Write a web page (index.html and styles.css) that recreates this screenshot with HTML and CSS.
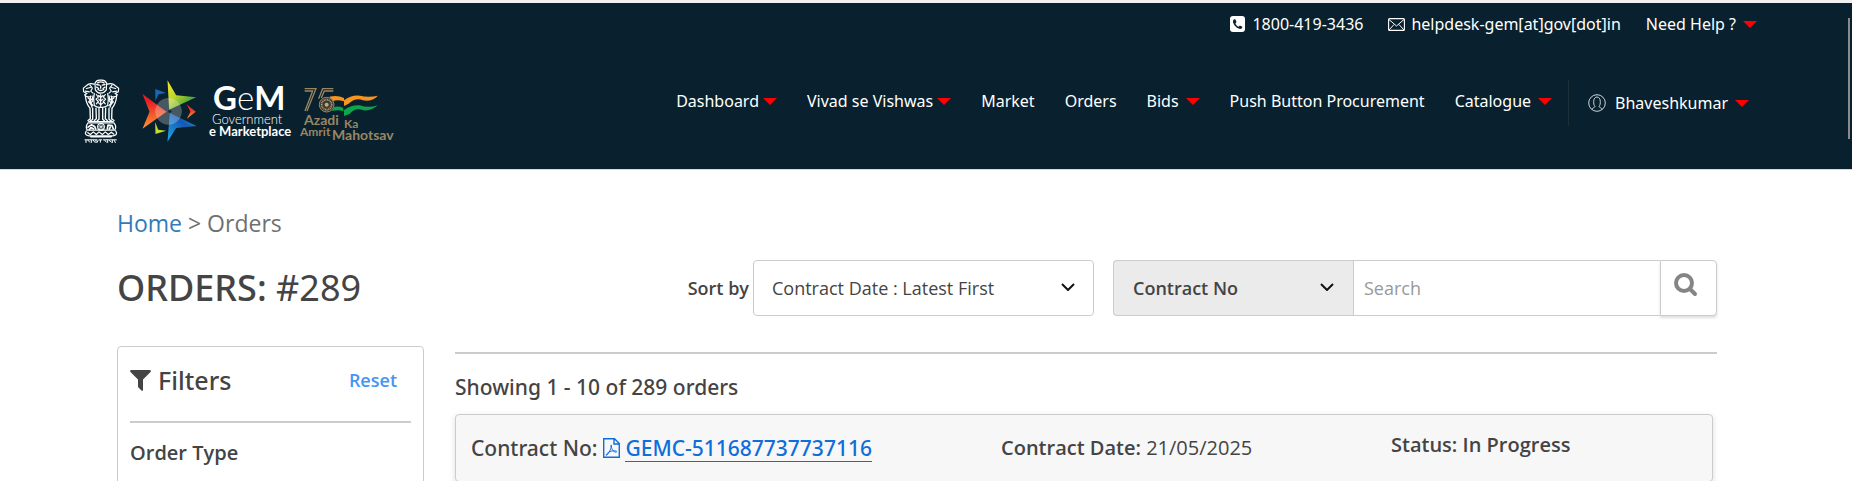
FILE: index.html
```html
<!DOCTYPE html>
<html lang="en">
<head>
<meta charset="utf-8">
<title>Orders</title>
<link rel="stylesheet" href="styles.css">
</head>
<body>
<header class="header">
  <div class="topbar">
    <a class="toplink" href="#"><svg class="phone" viewBox="0 0 15 16"><rect width="15" height="16" rx="3" fill="#fff"/><path d="M4.2 3.2C2.800 4 2.700 5.600 3.500 7.500C4.500 9.800 6.400 11.800 8.600 12.600C10.300 13.200 12 13 12.300 11.300L12.300 10.700L9.900 9.400L8.600 10.700C7.300 10.200 5.900 8.700 5.400 7.400L6.500 6.100L5.300 3.200Z" fill="#09212e"/></svg>1800-419-3436</a>
    <a class="toplink" href="#"><svg class="mail" viewBox="0 0 17 13"><rect x=".6" y=".6" width="15.800" height="11.800" rx="1" fill="none" stroke="#fff" stroke-width="1.100"/><path d="M1 1.500L8.500 8L16 1.500M1 12L6 6.500M16 12L11 6.500" fill="none" stroke="#fff"/></svg>helpdesk-gem[at]gov[dot]in</a>
    <a class="toplink" href="#">Need Help ?<span class="caret caret-wide"></span></a>
  </div>
  <div class="mainbar">
    <a class="logos" href="#" aria-label="Government e Marketplace home">
      <svg class="emblem" viewBox="0 0 114 194">
        <g fill="none" stroke="#fff" stroke-linecap="round" stroke-linejoin="round" stroke-width="3.500">
          <path d="M39 12Q44 1 56 3Q69 1 74 12L73 32Q66 42 56 42Q46 42 40 32Z"/>
          <path d="M44 16L52 18M61 18L69 16M47 11Q56 5 66 11M56 20V27M48 31Q56 37 65 31M44 24L50 28M69 24L63 28" stroke-width="4"/>
          <path d="M37 15Q22 10 14 19L4 27L5 38L15 43L8 47Q16 57 27 51M76 15Q91 10 99 19L110 27L109 38L99 43L106 47Q98 57 87 51"/>
          <path d="M13 28L25 25M10 36L22 38M24 18L31 27L26 36L33 42M101 28L89 25M104 36L92 38M90 18L83 27L88 36L81 42"/>
          <path d="M10 50Q12 72 23 86M104 50Q102 72 91 86M26 51Q22 66 30 84M88 51Q92 66 84 84"/>
          <path d="M37 43Q33 58 37 79Q46 86 56 84Q67 86 77 79Q81 58 77 43M43 46L49 54L42 60L49 67L43 74M70 46L64 54L71 60L64 67L70 74M56 46V80M50 49L56 55L63 49M50 60L56 66L63 60M50 71L56 77L63 71"/>
          <path d="M18 56L25 62L20 68L28 76M27 59L32 65L26 72L33 79M96 56L89 62L94 68L86 76M87 59L82 65L88 72L81 79M33 50L31 61M81 50L83 61" stroke-width="4"/>
          <path d="M24 87L25 119L18 124M32 87V121L25 125M42 87L43 119L37 124M51 88V120L46 125M62 88V120L67 125M71 87L70 119L76 124M81 87V121L88 125M90 87L89 119L96 124" stroke-width="4"/>
          <path d="M20 127H94M18 131H96Q105 143 98 153H16Q9 143 18 131Z"/>
          <circle cx="57" cy="143" r="10"/><path d="M57 133V153M47 143H67M50 136L64 150M64 136L50 150" stroke-width="2"/>
          <path d="M18 144L28 137L38 142L41 149M22 151L27 145L34 149M76 149L78 138L90 139L94 149M82 150L85 144" stroke-width="5"/>
          <path d="M13 155Q5 168 21 170H93Q109 168 101 155M17 160L25 166L34 158L43 166L51 158L61 166L70 158L79 166L88 159L96 165M26 173H88"/>
          <path d="M9 182H45M51 182H59M64 182H103M12 183V190M18 183L23 189M28 183V190M34 183L38 189M42 183V190M48 184L45 190M55 183V189M68 183L73 189M77 183V190M82 184L88 189M91 183V190M97 184L100 190" stroke-width="3"/>
        </g>
      </svg>
      <svg class="star" viewBox="219 32 164 186">
        <defs>
          <linearGradient id="red" x1="0" y1="0" x2="0" y2="1"><stop offset=".2" stop-color="#e91c24"/><stop offset="1" stop-color="#fb9a32"/></linearGradient>
          <linearGradient id="green" x1="0" y1="0" x2="1" y2="1"><stop offset="0" stop-color="#f7e62b"/><stop offset=".4" stop-color="#bdd52d"/><stop offset=".8" stop-color="#3d9f39"/></linearGradient>
          <linearGradient id="blue" x1="0" y1="1" x2="1" y2="0"><stop offset="0" stop-color="#21a9e5"/><stop offset=".6" stop-color="#1458b5"/><stop offset="1" stop-color="#26b0e5"/></linearGradient>
        </defs>
        <path d="M258 59L291 71L268 75L259 94Z" fill="#1767bd"/><path d="M258 158L267 181L291 184L259 194Z" fill="#c5db30"/><path d="M352 105L380 127L353 148L364 127Z" fill="url(#red)"/>
        <path d="M220 74L292 127L220 178L241 127Z" fill="url(#red)"/>
        <path d="M295 33L321 78L381 84L300 121Z" fill="url(#green)"/>
        <path d="M302 131L382 170L321 176L295 217Z" fill="url(#blue)"/>
        <circle cx="298" cy="126" r="40" fill="#fff" opacity=".25"/>
        <circle cx="302" cy="126" r="5" fill="#09212e" opacity=".8"/>
      </svg>
      <svg class="wordmark" viewBox="209 72 84 72">
        <g fill="#fff">
          <text x="213" y="110" class="gem"><tspan class="heavy">G</tspan><tspan class="light">e</tspan><tspan class="heavy">M</tspan></text>
          <text x="212" y="124" class="gov">Government</text>
          <text x="209" y="136" class="market">e Marketplace</text>
        </g>
      </svg>
      <svg class="azadi" viewBox="300 80 100 64">
        <g transform="translate(195 70) scale(.3333)">
          <path d="M329 56H363L336 123M329 63H353L330 123M415 56H383L371 86M415 63H388L379 84" fill="none" stroke="#998662" stroke-width="4"/>
          <path d="M403 80Q427 74 447 84V94Q427 88 414 93Z" fill="#f7941e"/><path d="M415 97L443 95V107L418 109Z" fill="#09212e"/><path d="M417 111Q430 107 445 114V124Q430 118 411 123Z" fill="#0fa34b"/>
          <path d="M447 91Q469 74 495 77Q520 84 549 77Q531 96 504 91Q482 82 461 101L447 108Z" fill="#f7941e"/>
          <path d="M447 121Q468 104 494 106Q521 115 548 106Q532 123 506 121Q480 111 464 132L447 138Z" fill="#0fa34b"/>
          <circle cx="395" cy="104" r="22" fill="#3d3b35" stroke="#998662" stroke-width="3"/><circle cx="395" cy="104" r="15" fill="none" stroke="#b39b70" stroke-width="5" stroke-dasharray="3 2"/><circle cx="395" cy="104" r="6" fill="#c0aa80"/>
        </g>
        <g fill="#998662" class="gold"><text x="304" y="125" class="azadi-lg">Azadi</text><text x="344" y="128" class="azadi-sm">Ka</text><text x="300" y="136" class="azadi-sm">Amrit</text><text x="332" y="140" class="azadi-lg">Mahotsav</text></g>
      </svg>
    </a>
    <nav class="nav">
      <a href="#">Dashboard<span class="caret"></span></a>
      <a href="#">Vivad se Vishwas<span class="caret"></span></a>
      <a href="#">Market</a>
      <a href="#">Orders</a>
      <a href="#">Bids<span class="caret caret-wide"></span></a>
      <a href="#">Push Button Procurement</a>
      <a href="#">Catalogue<span class="caret caret-wide"></span></a>
    </nav>
    <a class="user" href="#"><svg class="avatar" viewBox="0 0 18 18"><g fill="none" stroke="#cdd4d8"><circle cx="9" cy="9" r="8.300"/><path d="M4 15.500C4.500 13.500 7 13.500 7 12.500C5.700 11 5.700 9.500 5.700 7.500C5.700 1.500 12.300 1.500 12.300 7.500C12.300 9.500 12.300 11 11 12.500C11 13.500 13.500 13.500 14 15.500"/></g></svg>Bhaveshkumar<span class="caret caret-wide"></span></a>
  </div>
  <span class="scroll-thumb"></span>
</header>
<main class="page">
  <div class="crumbs"><a href="#">Home</a> &gt; Orders</div>
  <div class="toolbar">
    <h1 class="title"><span class="medium">ORDERS:</span> #289</h1>
    <label class="sort-label" for="sort">Sort by</label>
    <div class="picker sort">
      <select id="sort"><option>Contract Date : Latest First</option></select>
      <svg class="chevron" viewBox="0 0 14 8"><path d="M1 1L7 7L13 1" fill="none" stroke="#111" stroke-width="2"/></svg>
    </div>
    <form class="search">
      <div class="picker field">
        <select aria-label="Search field"><option>Contract No</option></select>
        <svg class="chevron" viewBox="0 0 14 8"><path d="M1 1L7 7L13 1" fill="none" stroke="#111" stroke-width="2"/></svg>
      </div>
      <input type="text" placeholder="Search" aria-label="Search">
      <button type="button" aria-label="Search"><svg viewBox="0 0 24 24"><circle cx="10" cy="10" r="8" fill="none" stroke="#858585" stroke-width="4"/><path d="M16 16L21 21" stroke="#858585" stroke-width="4" stroke-linecap="round"/></svg></button>
    </form>
  </div>
  <div class="columns">
    <aside class="filters">
      <div class="filters-head">
        <svg class="funnel" viewBox="0 0 21 21"><path d="M1 0H20Q21.500 .500 20.500 2L13 9.500V20Q12.500 21.500 11.500 20.500L8.500 17.500Q8 17 8 16V9.500L.5 2Q-.5 .500 1 0Z" fill="#444"/></svg>
        <h2>Filters</h2>
        <a href="#">Reset</a>
      </div>
      <h3>Order Type</h3>
    </aside>
    <section class="results">
      <p class="count">Showing 1 - 10 of 289 orders</p>
      <article class="card">
        <div class="contract">Contract No: <a href="#" aria-label="Download PDF"><svg class="pdf" viewBox="0 0 17 20"><g fill="none" stroke="#0e6edb" stroke-width="1.400"><path d="M1 .700H11.500L16.300 5.500V19.300H.7V.700ZM11 1V6H16"/><path d="M8.300 7C7 7 9 11 10 12.500C11.500 14.500 14 14.500 13.700 13.500C13.300 12.500 8 12.500 6 14C4 15.300 2.500 17 3.300 17.300C5 17.500 9.500 8 8.300 7Z" stroke-width="1"/></g></svg></a> <a class="number" href="#">GEMC-511687737737116</a></div>
        <div class="date">Contract Date: <span>21/05/2025</span></div>
        <div class="status">Status: In Progress</div>
      </article>
    </section>
  </div>
</main>
</body>
</html>
```
FILE: styles.css
```css
* { box-sizing: border-box; }
body {
  margin: 0;
  font-family: "Open Sans", "Noto Sans", sans-serif;
  font-size: 16px;
  color: #444;
  background: #fff;
  overflow: hidden;
}
a { text-decoration: none; }
h1, h2, h3, p { margin: 0; }
svg { flex: none; }

.header {
  position: relative;
  background: #09212e;
  border-top: 3px solid #f0f0f0;
  border-bottom: 1px solid #d5dade;
  padding-bottom: 25px;
}
.header, .title, .filters h2, .count, .contract {
  font-family: "Noto Sans", "Open Sans", sans-serif;
}
.header a { color: #fff; white-space: nowrap; }
.topbar {
  display: flex;
  justify-content: flex-end;
  gap: 25px;
  padding: 9px 95px 0 0;
  line-height: 24px;
}
.toplink { display: flex; align-items: center; }
.phone { width: 15px; height: 16px; margin-right: 7px; }
.mail { width: 17px; height: 13px; margin-right: 6px; }
.caret {
  display: inline-block;
  border: 7px solid transparent;
  border-top-color: red;
  border-bottom: 0;
  margin-left: 4px;
}
.caret-wide { margin-left: 7px; }
.mainbar {
  display: flex;
  align-items: flex-start;
  padding: 36px 103px 0 82px;
}
.logos { display: flex; align-items: flex-end; }
.emblem { width: 38px; height: 65px; margin-right: 22px; }
.star { width: 55px; height: 62px; margin: 0 12px 2px 0; }
.wordmark { width: 84px; height: 72px; margin-right: 7px; }
.azadi { width: 100px; height: 64px; }
.wordmark, .gold { font-family: Lato, sans-serif; }
.gem { font-size: 33px; }
.heavy { font-weight: 700; }
.light { font-weight: 300; }
.gov { font-size: 13px; font-weight: 300; }
.market { font-size: 13px; font-weight: 700; }
.azadi-lg { font-size: 14px; font-weight: 700; }
.azadi-sm { font-size: 12px; font-weight: 700; }
.nav {
  display: flex;
  align-items: flex-start;
  gap: 30px;
  margin-left: auto;
  padding-top: 17px;
  line-height: 24px;
}
.nav a { display: flex; align-items: center; }
.user {
  display: flex;
  align-items: center;
  height: 46px;
  margin: 8px 0 0 16px;
  padding-left: 19px;
  border-left: 1px solid #1d2f39;
}
.avatar { width: 18px; height: 18px; margin-right: 9px; }
.scroll-thumb {
  position: absolute;
  right: 2px;
  top: 15px;
  width: 2px;
  height: 121px;
  background: #8b8b8b;
}

.page { padding: 35px 135px 0 117px; }
.crumbs { font-size: 23px; line-height: 36px; color: #707070; }
.crumbs a { color: #337ab7; }
.toolbar { display: flex; align-items: center; margin-top: 19px; }
.title { font-size: 36px; line-height: 56px; font-weight: 400; margin-right: auto; }
.medium { font-weight: 500; }
.sort-label { font-size: 18px; font-weight: 600; margin-right: 4px; }
.picker { position: relative; height: 56px; }
.picker select {
  appearance: none;
  width: 100%;
  height: 100%;
  padding: 0 18px;
  border: 1px solid #ccc;
  border-radius: 4px;
  background: #fff;
  font: inherit;
  font-size: 18px;
  color: #444;
}
.chevron { position: absolute; right: 19px; top: 23px; width: 14px; height: 8px; }
.sort { width: 341px; margin-right: 19px; }
.search { display: flex; width: 604px; height: 56px; }
.field { width: 240px; }
.picker.field select { background: #ebebeb; padding-left: 19px; border-radius: 4px 0 0 4px; border-right: 0; font-weight: 600; }
.search input {
  flex: 1;
  min-width: 0;
  padding: 0 10px;
  border: 1px solid #ccc;
  border-right: 0;
  font: inherit;
  font-size: 18px;
}
.search input::placeholder { color: #999; opacity: 1; }
.search button {
  width: 57px;
  padding: 0 6px 7px 0;
  border: 1px solid #ccc;
  border-radius: 0 4px 4px 0;
  background: #fff;
  box-shadow: 0 2px 3px #ddd;
}
.search svg:not(.chevron) { width: 24px; height: 24px; vertical-align: middle; }

.columns { display: flex; align-items: flex-start; margin-top: 30px; gap: 31px; }
.filters {
  flex: none;
  width: 307px;
  padding: 0 12px 24px;
  border: 1px solid #ccc;
  border-radius: 4px;
}
.filters-head {
  display: flex;
  align-items: center;
  height: 76px;
  padding: 0 14px 8px 0;
  border-bottom: 2px solid #ccc;
}
.funnel { width: 21px; height: 21px; margin-right: 7px; }
.filters h2 { font-size: 25px; font-weight: 500; margin-right: auto; }
.filters-head a { font-size: 18px; font-weight: 600; color: #4694f5; }
.filters h3 { font-size: 20px; font-weight: 600; line-height: 30px; margin-top: 15px; }
.results { flex: 1; margin-top: 6px; border-top: 2px solid #ccc; }
.count { font-size: 21px; font-weight: 500; line-height: 30px; padding: 18px 0 12px; }
.card {
  display: grid;
  grid-template-columns: 530px 390px 1fr;
  margin-right: 4px;
  padding: 18px 15px;
  border: 1px solid #ccc;
  border-radius: 4px;
  background: #f7f7f7;
  box-shadow: 0 2px 6px #ddd;
  font-size: 20px;
  font-weight: 600;
  line-height: 30px;
}
.contract { font-size: 21px; font-weight: 500; }
.date span { font-weight: 400; }
.pdf { width: 17px; height: 20px; vertical-align: -2px; }
.number { display: inline-block; line-height: 26px; color: #0e6edb; border-bottom: 1px solid #0e6edb; }
.status { line-height: 24px; }
```
